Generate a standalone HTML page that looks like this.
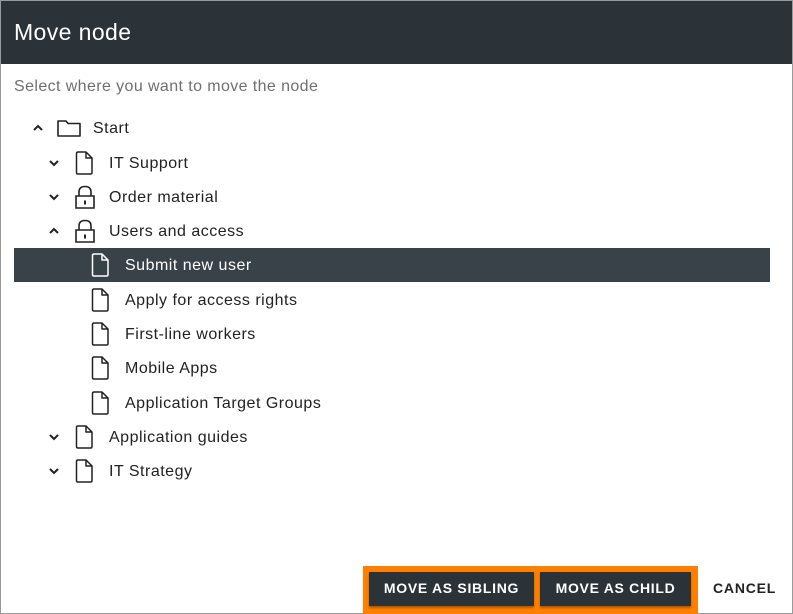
<!DOCTYPE html>
<html><head><style>
body{margin:0;width:793px;height:614px;overflow:hidden;font-family:"Liberation Sans",sans-serif;background:#fff;position:relative}
.frame{position:absolute;left:0;top:0;width:791px;height:612px;border:1px solid #9a9a9a}
.hdr{position:absolute;left:1px;top:1px;width:791px;height:63px;background:#2b3339;color:#fff;font-size:23px;letter-spacing:0.4px;line-height:62px;padding-left:13px;box-sizing:border-box}
.sub{position:absolute;left:14px;top:78px;font-size:16px;letter-spacing:0.4px;color:#6f6f6f}
.row{position:absolute;height:34px;font-size:16px;letter-spacing:0.5px;color:#222;line-height:36px}
.row svg{position:absolute;top:0}
.hl{background:#3a4249;color:#fff}
.btnbox{position:absolute;left:363px;top:566px;width:335px;height:48px;background:#ff7f00}
.btn{position:absolute;top:572px;height:34px;background:#2b3339;color:#fff;font-size:14px;font-weight:bold;letter-spacing:0.7px;line-height:32px;text-align:center;box-shadow:0 2px 2px rgba(0,0,0,.3)}
.cancel{position:absolute;left:713px;top:572px;height:34px;line-height:32px;font-size:14px;letter-spacing:0.8px;color:#222;font-weight:bold}
</style></head><body>
<div class="frame"></div>
<div class="hdr">Move node</div>
<div class="sub">Select where you want to move the node</div>

<svg width="0" height="0" style="position:absolute">
<defs>
<symbol id="up" viewBox="0 0 12 12"><path d="M2 8 L6 4 L10 8" fill="none" stroke="currentColor" stroke-width="2"/></symbol>
<symbol id="down" viewBox="0 0 12 12"><path d="M2 4 L6 8 L10 4" fill="none" stroke="currentColor" stroke-width="2"/></symbol>
<symbol id="file" viewBox="0 0 20 26"><path d="M2.5 3.5 Q2.5 2 4 2 H12 L18 8 V22.5 Q18 24 16.5 24 H4 Q2.5 24 2.5 22.5 Z M12 2 V8 H18" fill="none" stroke="currentColor" stroke-width="1.5" stroke-linejoin="round"/></symbol>
<symbol id="lock" viewBox="0 0 24 26"><path d="M6 12 V8 Q6 2.5 12 2.5 Q18 2.5 18 8 V12 M3 12 H21 V24 H3 Z" fill="none" stroke="currentColor" stroke-width="1.6"/><rect x="11" y="16.5" width="2" height="4" fill="currentColor"/></symbol>
<symbol id="folder" viewBox="0 0 26 20"><path d="M2 3 H10 L12 5.5 H24 V18 H2 Z" fill="none" stroke="currentColor" stroke-width="1.6" stroke-linejoin="round"/></symbol>
</defs></svg>

<div class="row" style="left:0;top:111px;width:780px"><svg style="left:32px;top:11px" width="12" height="12"><use href="#up"/></svg><svg style="left:56px;top:7px" width="26" height="20"><use href="#folder"/></svg><span style="position:absolute;left:93px">Start</span></div>
<div class="row" style="left:0;top:146px;width:780px"><svg style="left:48px;top:11px" width="12" height="12"><use href="#down"/></svg><svg style="left:74px;top:4px" width="20" height="26"><use href="#file"/></svg><span style="position:absolute;left:109px">IT Support</span></div>
<div class="row" style="left:0;top:180px;width:780px"><svg style="left:48px;top:11px" width="12" height="12"><use href="#down"/></svg><svg style="left:73px;top:4px" width="24" height="26"><use href="#lock"/></svg><span style="position:absolute;left:109px">Order material</span></div>
<div class="row" style="left:0;top:214px;width:780px"><svg style="left:48px;top:11px" width="12" height="12"><use href="#up"/></svg><svg style="left:73px;top:4px" width="24" height="26"><use href="#lock"/></svg><span style="position:absolute;left:109px">Users and access</span></div>
<div class="row hl" style="left:14px;top:248px;width:756px"><svg style="left:76px;top:4px;color:#fff" width="20" height="26"><use href="#file"/></svg><span style="position:absolute;left:111px">Submit new user</span></div>
<div class="row" style="left:0;top:283px;width:780px"><svg style="left:90px;top:4px" width="20" height="26"><use href="#file"/></svg><span style="position:absolute;left:125px">Apply for access rights</span></div>
<div class="row" style="left:0;top:317px;width:780px"><svg style="left:90px;top:4px" width="20" height="26"><use href="#file"/></svg><span style="position:absolute;left:125px">First-line workers</span></div>
<div class="row" style="left:0;top:351px;width:780px"><svg style="left:90px;top:4px" width="20" height="26"><use href="#file"/></svg><span style="position:absolute;left:125px">Mobile Apps</span></div>
<div class="row" style="left:0;top:386px;width:780px"><svg style="left:90px;top:4px" width="20" height="26"><use href="#file"/></svg><span style="position:absolute;left:125px">Application Target Groups</span></div>
<div class="row" style="left:0;top:420px;width:780px"><svg style="left:48px;top:11px" width="12" height="12"><use href="#down"/></svg><svg style="left:74px;top:4px" width="20" height="26"><use href="#file"/></svg><span style="position:absolute;left:109px">Application guides</span></div>
<div class="row" style="left:0;top:454px;width:780px"><svg style="left:48px;top:11px" width="12" height="12"><use href="#down"/></svg><svg style="left:74px;top:4px" width="20" height="26"><use href="#file"/></svg><span style="position:absolute;left:109px">IT Strategy</span></div>

<div class="btnbox"></div>
<div class="btn" style="left:369px;width:165px">MOVE AS SIBLING</div>
<div class="btn" style="left:540px;width:151px">MOVE AS CHILD</div>
<div class="cancel">CANCEL</div>
</body></html>
